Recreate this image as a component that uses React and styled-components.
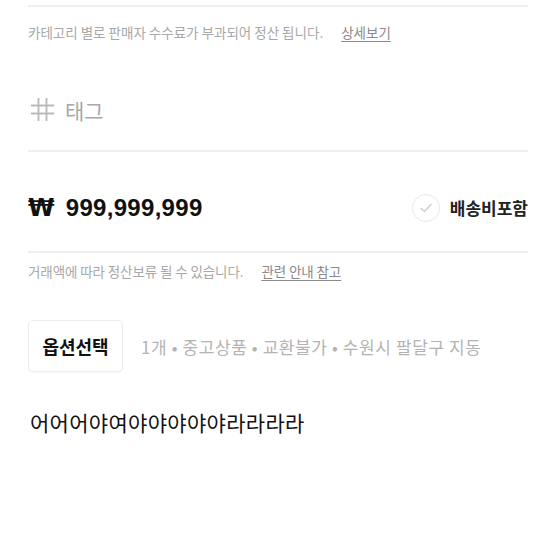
import React from "react";
import styled, { createGlobalStyle } from "styled-components";

const Global = createGlobalStyle`
  html, body { margin: 0; padding: 0; background: #fff; }
  body { font-family: "Noto Sans CJK KR", "Noto Sans", sans-serif; }
`;

const Page = styled.div`
  width: 554px;
  height: 554px;
  box-sizing: border-box;
  padding: 5px 26px 0 28px;
  display: flex;
  flex-direction: column;
  overflow: hidden;
`;

const Divider = styled.div`
  height: 2px;
  background: #efefef;
  flex-shrink: 0;
`;

const Notice = styled.p`
  margin: 0;
  height: ${(p) => p.$h}px;
  display: flex;
  align-items: center;
  font-size: 13.5px;
  color: #a8a8a8;
  white-space: nowrap;
  letter-spacing: ${(p) => p.$ls || 0}px;
`;

const NoticeLink = styled.span`
  margin-left: 18px;
  color: #8a8a8a;
  text-decoration: underline;
  text-underline-offset: 3px;
`;

const TagRow = styled.div`
  height: 93px;
  display: flex;
  align-items: center;
  gap: 10px;
  padding: 12px 0 0 2px;
  box-sizing: border-box;
`;

const HashIcon = styled.svg`
  width: 25px;
  height: 25px;
  flex-shrink: 0;
`;

const TagLabel = styled.span`
  font-size: 21px;
  color: #a9a9a9;
`;

const PriceRow = styled.div`
  height: 99px;
  box-sizing: border-box;
  padding-top: 12px;
  display: flex;
  align-items: center;
  justify-content: space-between;
`;

const Price = styled.div`
  display: flex;
  align-items: center;
  gap: 11px;
  font-family: "Liberation Sans", Arial, sans-serif;
  font-weight: 700;
  font-size: 24px;
  color: #111;
  letter-spacing: 0.3px;
`;

const Won = styled.span`
  font-family: "DejaVu Sans", sans-serif;
  font-weight: 700;
  font-size: 24px;
`;

const Shipping = styled.label`
  display: flex;
  align-items: center;
  gap: 10px;
  font-size: 17px;
  font-weight: 700;
  color: #222;
`;

const CheckCircle = styled.span`
  width: 26px;
  height: 26px;
  border-radius: 50%;
  border: 1.5px solid #e8e8e8;
  display: flex;
  align-items: center;
  justify-content: center;
`;

const OptionRow = styled.div`
  display: flex;
  align-items: center;
  gap: 18px;
  margin-top: 31px;
`;

const OptionButton = styled.button`
  width: 95px;
  height: 52px;
  border: 1px solid #ececec;
  border-radius: 5px;
  background: #fff;
  font-family: "Noto Sans CJK KR", sans-serif;
  font-size: 18px;
  font-weight: 700;
  color: #111;
  padding: 0;
  box-shadow: 0 1px 2px rgba(0, 0, 0, 0.04);
`;

const OptionSummary = styled.span`
  font-size: 17px;
  color: #b3b3b3;
  white-space: nowrap;
  letter-spacing: 0.6px;
`;

const Description = styled.p`
  margin: 35px 0 0 2px;
  font-size: 21px;
  line-height: 30px;
  color: #111;
  letter-spacing: 0.3px;
`;

export default function App() {
  return (
    <>
      <Global />
      <Page>
        <Divider />
        <Notice $h={50}>
          카테고리 별로 판매자 수수료가 부과되어 정산 됩니다.
          <NoticeLink>상세보기</NoticeLink>
        </Notice>
        <TagRow>
          <HashIcon viewBox="0 0 25 25" fill="none" stroke="#b9b9b9" strokeWidth="1.8">
            <path d="M8.5 1 V24 M16.5 1 V24 M1 8.5 H24 M1 16.5 H24" />
          </HashIcon>
          <TagLabel>태그</TagLabel>
        </TagRow>
        <Divider />
        <PriceRow>
          <Price>
            <Won>₩</Won>
            <span>999,999,999</span>
          </Price>
          <Shipping>
            <CheckCircle>
              <svg width="14" height="14" viewBox="0 0 14 14" fill="none">
                <path d="M2 7.2 L5.6 10.5 L12 3.5" stroke="#cfcfcf" strokeWidth="1.5" strokeLinecap="round" strokeLinejoin="round" />
              </svg>
            </CheckCircle>
            배송비포함
          </Shipping>
        </PriceRow>
        <Divider />
        <Notice $h={36} $ls={-0.1}>
          거래액에 따라 정산보류 될 수 있습니다.
          <NoticeLink>관련 안내 참고</NoticeLink>
        </Notice>
        <OptionRow>
          <OptionButton>옵션선택</OptionButton>
          <OptionSummary>1개 • 중고상품 • 교환불가 • 수원시 팔달구 지동</OptionSummary>
        </OptionRow>
        <Description>어어어야여야야야야야라라라라</Description>
      </Page>
    </>
  );
}
